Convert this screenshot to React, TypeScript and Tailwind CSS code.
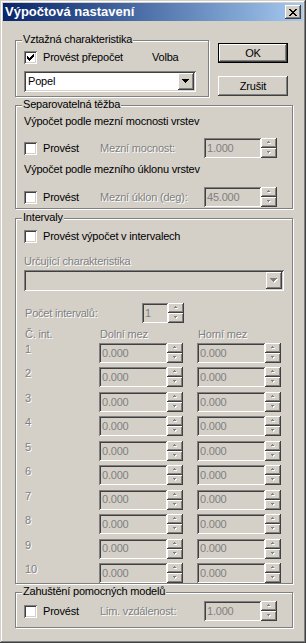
import React from "react";

// classic 3D edges
const raised =
  "shadow-[inset_-1px_-1px_#404040,inset_1px_1px_#fff,inset_-2px_-2px_#808080,inset_2px_2px_#d4d0c8]";
const sunken =
  "shadow-[inset_1px_1px_#808080,inset_-1px_-1px_#fff,inset_2px_2px_#404040,inset_-2px_-2px_#d4d0c8]";
const dis = "text-[#808080] [text-shadow:1px_1px_0_#fff]";

const CloseGlyph = () => (
  <svg width="8" height="7" viewBox="0 0 8 7" shapeRendering="crispEdges">
    <path
      fill="#000"
      d="M0 0h2v1H0zM6 0h2v1H6zM1 1h2v1H1zM5 1h2v1H5zM2 2h4v1H2zM3 3h2v1H3zM2 4h4v1H2zM1 5h2v1H1zM5 5h2v1H5zM0 6h2v1H0zM6 6h2v1H6z"
    />
  </svg>
);

const CheckGlyph = () => (
  <svg width="7" height="7" viewBox="0 0 7 7" shapeRendering="crispEdges">
    <path
      fill="#000"
      d="M0 2h1v3H0zM1 3h1v3H1zM2 4h1v3H2zM3 3h1v3H3zM4 2h1v3H4zM5 1h1v3H5zM6 0h1v3H6z"
    />
  </svg>
);

const DropArrow = ({ disabled }: { disabled?: boolean }) => (
  <svg width="8" height="5" viewBox="0 0 8 5" shapeRendering="crispEdges">
    {disabled && <path fill="#fff" d="M1 1h7v1H1zM2 2h5v1H2zM3 3h3v1H3zM4 4h1v1H4z" />}
    <path
      fill={disabled ? "#808080" : "#000"}
      d="M0 0h7v1H0zM1 1h5v1H1zM2 2h3v1H2zM3 3h1v1H3z"
    />
  </svg>
);

const SpinArrow = ({ up }: { up?: boolean }) => (
  <svg width="6" height="4" viewBox="0 0 6 4" shapeRendering="crispEdges">
    {up ? (
      <>
        <path fill="#fff" d="M3 1h1v1H3zM2 2h3v1H2z" />
        <path fill="#808080" d="M2 0h1v1H2zM1 1h3v1H1z" />
      </>
    ) : (
      <>
        <path fill="#fff" d="M2 1h3v1H2zM3 2h1v1H3z" />
        <path fill="#808080" d="M1 0h3v1H1zM2 1h1v1H2z" />
      </>
    )}
  </svg>
);

const Checkbox = ({ checked }: { checked?: boolean }) => (
  <span className={`w-[13px] h-[13px] shrink-0 bg-white ${sunken} flex items-center justify-center`}>
    {checked && <CheckGlyph />}
  </span>
);

const Spin = () => (
  <div className="flex flex-col w-[16px] h-[20px] shrink-0">
    <div className={`h-[10px] bg-[#d4d0c8] ${raised} flex items-center justify-center`}>
      <SpinArrow up />
    </div>
    <div className={`h-[10px] bg-[#d4d0c8] ${raised} flex items-center justify-center`}>
      <SpinArrow />
    </div>
  </div>
);

const Edit = ({ value, className }: { value: string; className: string }) => (
  <div
    className={`h-[20px] shrink-0 ${sunken} bg-[#d4d0c8] text-[#808080] flex items-center pl-[3px] ${className}`}
  >
    {value}
  </div>
);

const GroupBox = ({
  label,
  className,
  children,
}: {
  label: string;
  className: string;
  children: React.ReactNode;
}) => (
  <div
    className={`relative border border-[#808080] shadow-[inset_1px_1px_#fff,1px_1px_#fff] ${className}`}
  >
    <span className="absolute left-[6px] -top-[8px] bg-[#d4d0c8] px-[1px] leading-[13px]">
      {label}
    </span>
    {children}
  </div>
);

const Button = ({ label, isDefault }: { label: string; isDefault?: boolean }) => (
  <div
    className={`w-[70px] h-[20px] bg-[#d4d0c8] flex items-center justify-center ${
      isDefault ? "border border-black" : ""
    }`}
  >
    <div className={`w-full h-full ${raised} flex items-center justify-center`}>{label}</div>
  </div>
);

const rows = [1, 2, 3, 4, 5, 6, 7, 8, 9, 10];

export default function App() {
  return (
    <div
      className={`w-[306px] h-[643px] bg-[#d4d0c8] p-[3px] flex flex-col font-['Liberation_Sans',Arial,sans-serif] text-[11px] tracking-[-0.2px] text-black shadow-[inset_-1px_-1px_#404040,inset_1px_1px_#d4d0c8,inset_-2px_-2px_#808080,inset_2px_2px_#fff]`}
    >
      {/* title bar */}
      <div className="h-[18px] shrink-0 flex items-center justify-between bg-linear-to-r from-[#0a246a] to-[#a6caf0] pl-[2px] pr-[2px]">
        <span className="text-white font-bold text-[13px] tracking-normal leading-[18px]">
          Výpočtová nastavení
        </span>
        <div className={`w-[16px] h-[14px] bg-[#d4d0c8] ${raised} flex items-center justify-center`}>
          <CloseGlyph />
        </div>
      </div>

      <div className="flex flex-col pl-[12px]">
        {/* top row */}
        <div className="flex mt-[19px]">
          <GroupBox label="Vztažná charakteristika" className="w-[194px] h-[57px] pl-[8px] pt-[10px]">
            <div className="flex items-center h-[13px]">
              <Checkbox checked />
              <span className="ml-[6px] w-[109px] leading-[13px]">Provést přepočet</span>
              <span className="leading-[13px]">Volba</span>
            </div>
            <div className={`mt-[7px] w-[172px] h-[21px] bg-white ${sunken} flex items-center justify-between pl-[4px] pr-[2px]`}>
              <span>Popel</span>
              <div className={`w-[16px] h-[17px] bg-[#d4d0c8] ${raised} flex items-center justify-center`}>
                <DropArrow />
              </div>
            </div>
          </GroupBox>
          <div className="ml-[9px] flex flex-col">
            <div className="mt-[3px]">
              <Button label="OK" isDefault />
            </div>
            <div className="mt-[13px]">
              <Button label="Zrušit" />
            </div>
          </div>
        </div>

        {/* separovatelna tezba */}
        <GroupBox label="Separovatelná těžba" className="mt-[8px] w-[278px] h-[104px] pl-[8px]">
          <div className="mt-[9px] leading-[13px]">Výpočet podle mezní mocnosti vrstev</div>
          <div className="mt-[10px] flex items-center h-[20px]">
            <Checkbox />
            <span className="ml-[6px] w-[57px]">Provést</span>
            <span className={`w-[104px] ${dis}`}>Mezní mocnost:</span>
            <Edit value="1.000" className="w-[57px]" />
            <Spin />
          </div>
          <div className="mt-[5px] leading-[13px]">Výpočet podle mezního úklonu vrstev</div>
          <div className="mt-[11px] flex items-center h-[20px]">
            <Checkbox />
            <span className="ml-[6px] w-[57px]">Provést</span>
            <span className={`w-[104px] ${dis}`}>Mezní úklon (deg):</span>
            <Edit value="45.000" className="w-[57px]" />
            <Spin />
          </div>
        </GroupBox>

        {/* intervaly */}
        <GroupBox label="Intervaly" className="mt-[9px] w-[278px] h-[366px] pl-[8px]">
          <div className="mt-[11px] flex items-center h-[13px]">
            <Checkbox />
            <span className="ml-[6px] leading-[13px]">Provést výpočet v intervalech</span>
          </div>
          <div className={`mt-[12px] leading-[13px] ${dis}`}>Určující charakteristika</div>
          <div className={`mt-[2px] w-[260px] h-[21px] bg-[#d4d0c8] ${sunken} flex items-center justify-end pr-[2px]`}>
            <div className={`w-[16px] h-[17px] bg-[#d4d0c8] ${raised} flex items-center justify-center`}>
              <DropArrow disabled />
            </div>
          </div>
          <div className="mt-[12px] flex items-center h-[20px]">
            <span className={`w-[118px] pl-[1px] ${dis}`}>Počet intervalů:</span>
            <Edit value="1" className="w-[26px]" />
            <Spin />
          </div>
          <div className={`mt-[5px] flex leading-[13px] ${dis}`}>
            <span className="w-[75px] pl-[1px]">Č. int.</span>
            <span className="w-[98px] pl-[1px]">Dolní mez</span>
            <span className="pl-[1px]">Horní mez</span>
          </div>
          <div className="mt-[2px] flex flex-col gap-[4.44px]">
            {rows.map((n) => (
              <div key={n} className="flex items-start h-[20px]">
                <span className={`w-[75px] pl-[1px] leading-[13px] ${dis}`}>{n}</span>
                <Edit value="0.000" className="w-[68px]" />
                <Spin />
                <Edit value="0.000" className="ml-[14px] w-[68px]" />
                <Spin />
              </div>
            ))}
          </div>
        </GroupBox>

        {/* zahusteni */}
        <GroupBox label="Zahuštění pomocných modelů" className="mt-[8px] w-[278px] h-[36px] pl-[8px]">
          <div className="mt-[8px] flex items-center h-[20px]">
            <Checkbox />
            <span className="ml-[6px] w-[57px]">Provést</span>
            <span className={`w-[104px] ${dis}`}>Lim. vzdálenost:</span>
            <Edit value="1.000" className="w-[57px]" />
            <Spin />
          </div>
        </GroupBox>
      </div>
    </div>
  );
}
